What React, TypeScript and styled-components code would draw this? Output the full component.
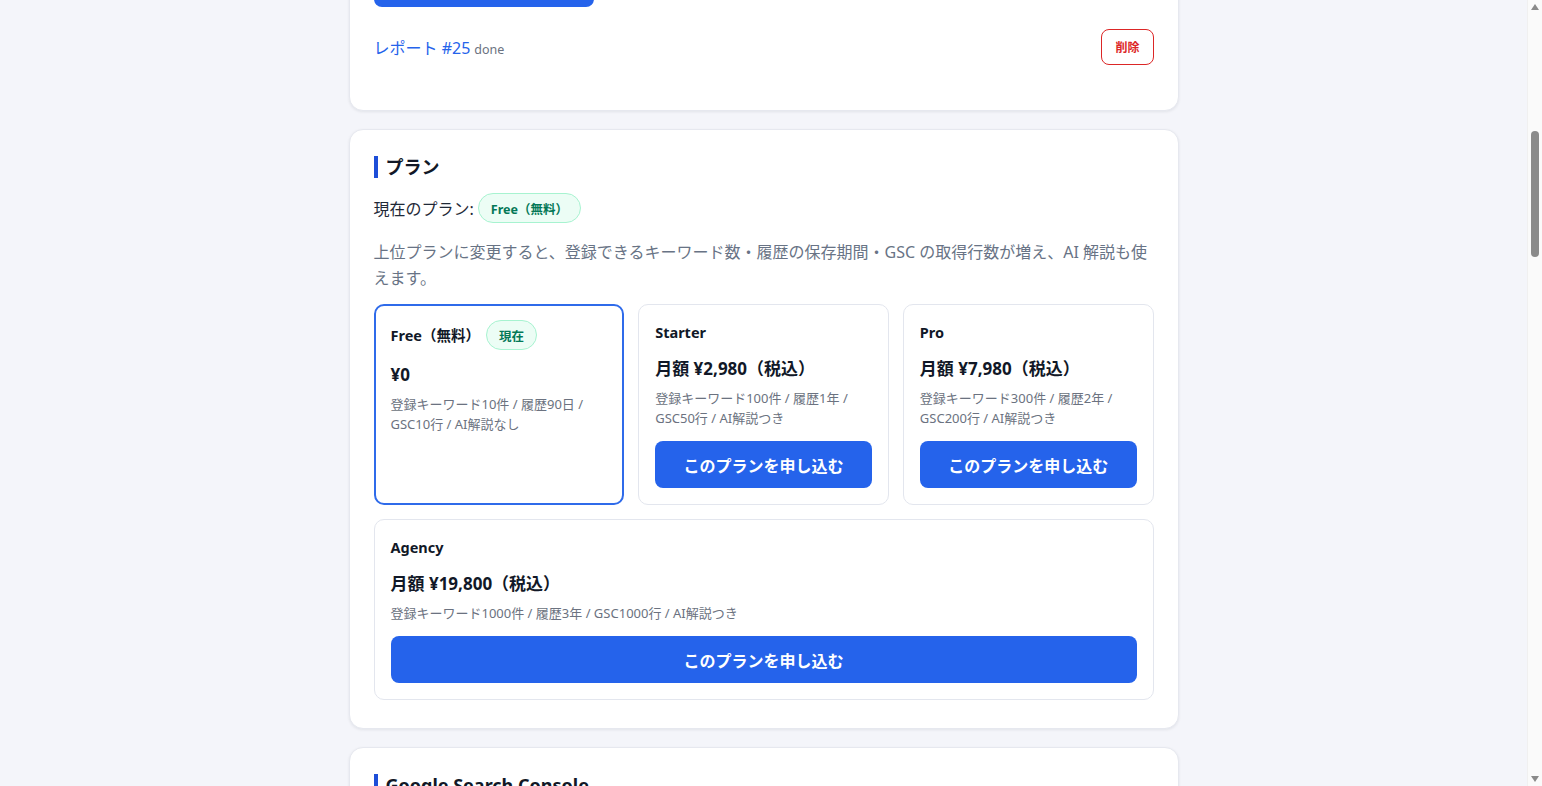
import React from "react";
import styled, { createGlobalStyle } from "styled-components";

const GlobalStyle = createGlobalStyle`
  html {
    overflow: hidden;
  }
  body {
    margin: 0;
    padding-right: 15px;
    background: #f4f5fa;
    font-family: "Noto Sans", "Noto Sans CJK JP", sans-serif;
    color: #111827;
  }
`;

const Page = styled.main`
  max-width: 830px;
  margin: -67px auto 0;
  display: flex;
  flex-direction: column;
  gap: 18px;
  padding-bottom: 40px;
`;

const Card = styled.section`
  background: #fff;
  border: 1px solid #e6e8ef;
  border-radius: 14px;
  box-shadow: 0 1px 3px rgba(15, 23, 42, 0.08);
  padding: 26px 24px 24px;
`;

const PrimaryButton = styled.button<{ $wide?: boolean }>`
  display: block;
  width: ${(p) => (p.$wide ? "100%" : "220px")};
  height: 47px;
  border: none;
  border-radius: 8px;
  background: #2563eb;
  color: #fff;
  font-family: inherit;
  font-size: 16px;
  font-weight: 700;
  cursor: pointer;
`;

const ReportRow = styled.div`
  display: flex;
  align-items: center;
  justify-content: space-between;
  margin-top: 22px;
  margin-bottom: 21px;
`;

const ReportLink = styled.a`
  color: #2563eb;
  font-size: 16px;
  text-decoration: none;
`;

const Status = styled.span`
  color: #6b7280;
  font-size: 12.5px;
  margin-left: 4px;
`;

const DangerButton = styled.button`
  height: 36px;
  padding: 0 13px;
  background: #fff;
  border: 1px solid #dc2626;
  border-radius: 8px;
  color: #dc2626;
  font-family: inherit;
  font-size: 12px;
  font-weight: 700;
`;

const SectionTitle = styled.h2`
  margin: 0 0 15px;
  padding-left: 8px;
  border-left: 4px solid #1d4ed8;
  font-size: 18px;
  font-weight: 700;
  line-height: 22px;
  color: #111827;
`;

const CurrentLine = styled.div`
  display: flex;
  align-items: center;
  gap: 4px;
  font-size: 16px;
  color: #1f2937;
`;

const Pill = styled.span`
  display: inline-flex;
  align-items: center;
  box-sizing: border-box;
  padding: 0 12px;
  height: 30px;
  border-radius: 999px;
  background: #ecfdf5;
  border: 1px solid #a7f3d0;
  color: #047857;
  font-size: 12.5px;
  font-weight: 700;
`;

const Lead = styled.p`
  margin: 16px 0 13px;
  font-size: 16px;
  line-height: 26px;
  color: #687385;
`;

const PlanGrid = styled.div`
  display: flex;
  flex-wrap: wrap;
  gap: 14px;
  margin-bottom: 4px;
`;

const PlanCard = styled.div<{ $current?: boolean }>`
  flex: 1 1 220px;
  box-sizing: border-box;
  padding: ${(p) => (p.$current ? "15px" : "16px")};
  border: ${(p) => (p.$current ? "2px solid #2f6bea" : "1px solid #e3e6ee")};
  border-radius: 10px;
  background: #fff;
  display: flex;
  flex-direction: column;
`;

const PlanHead = styled.div`
  display: flex;
  align-items: center;
  gap: 6px;
  min-height: 22px;

  ${Pill} {
    margin: -1px 0;
  }
`;

const PlanName = styled.span`
  font-size: 14.5px;
  font-weight: 700;
  line-height: 22px;
`;

const Price = styled.div`
  margin-top: 15px;
  font-size: 17px;
  font-weight: 700;
  line-height: 22px;
`;

const Spec = styled.div`
  margin-top: 8px;
  font-size: 13px;
  line-height: 20px;
  color: #6b7280;
`;

const ButtonSlot = styled.div`
  margin-top: 13px;
`;

const GscText = styled.p`
  margin: 0;
  font-size: 14px;
  line-height: 22px;
  color: #6b7280;
`;

/* browser scrollbar overlay, drawn to match the captured page */
const ScrollTrack = styled.div`
  position: fixed;
  top: 0;
  right: 0;
  width: 15px;
  height: 100vh;
  background: #fafafa;
  border-left: 1px solid #f0f0f0;
  box-sizing: border-box;
`;

const ScrollArrow = styled.div<{ $down?: boolean }>`
  position: absolute;
  left: 3px;
  ${(p) => (p.$down ? "bottom: 4px;" : "top: 4px;")}
  width: 0;
  height: 0;
  border-left: 4px solid transparent;
  border-right: 4px solid transparent;
  ${(p) =>
    p.$down ? "border-top: 6px solid #8a8a8a;" : "border-bottom: 6px solid #8a8a8a;"}
`;

const ScrollThumb = styled.div`
  position: absolute;
  left: 3px;
  top: 131px;
  width: 8px;
  height: 126px;
  border-radius: 4px;
  background: #8a8a8a;
`;

type Plan = {
  name: string;
  price: string;
  spec: string;
  current?: boolean;
};

const plans: Plan[] = [
  {
    name: "Free（無料）",
    price: "¥0",
    spec: "登録キーワード10件 / 履歴90日 / GSC10行 / AI解説なし",
    current: true,
  },
  {
    name: "Starter",
    price: "月額 ¥2,980（税込）",
    spec: "登録キーワード100件 / 履歴1年 / GSC50行 / AI解説つき",
  },
  {
    name: "Pro",
    price: "月額 ¥7,980（税込）",
    spec: "登録キーワード300件 / 履歴2年 / GSC200行 / AI解説つき",
  },
  {
    name: "Agency",
    price: "月額 ¥19,800（税込）",
    spec: "登録キーワード1000件 / 履歴3年 / GSC1000行 / AI解説つき",
  },
];

const App = () => {
  return (
    <>
      <GlobalStyle />
      <Page>
        <Card>
          <PrimaryButton>レポートを作成</PrimaryButton>
          <ReportRow>
            <div>
              <ReportLink href="#">レポート #25</ReportLink>
              <Status>done</Status>
            </div>
            <DangerButton>削除</DangerButton>
          </ReportRow>
        </Card>

        <Card>
          <SectionTitle>プラン</SectionTitle>
          <CurrentLine>
            現在のプラン: <Pill>Free（無料）</Pill>
          </CurrentLine>
          <Lead>
            上位プランに変更すると、登録できるキーワード数・履歴の保存期間・GSC
            の取得行数が増え、AI 解説も使えます。
          </Lead>
          <PlanGrid>
            {plans.map((plan) => (
              <PlanCard key={plan.name} $current={plan.current}>
                <PlanHead>
                  <PlanName>{plan.name}</PlanName>
                  {plan.current && <Pill>現在</Pill>}
                </PlanHead>
                <Price>{plan.price}</Price>
                <Spec>{plan.spec}</Spec>
                {!plan.current && (
                  <ButtonSlot>
                    <PrimaryButton $wide>このプランを申し込む</PrimaryButton>
                  </ButtonSlot>
                )}
              </PlanCard>
            ))}
          </PlanGrid>
        </Card>

        <Card>
          <SectionTitle>Google Search Console</SectionTitle>
          <GscText>
            Search Console と連携すると、検索クエリの表示回数・クリック数を取得できます。
          </GscText>
          <ButtonSlot>
            <PrimaryButton>連携する</PrimaryButton>
          </ButtonSlot>
        </Card>
      </Page>
      <ScrollTrack>
        <ScrollArrow />
        <ScrollThumb />
        <ScrollArrow $down />
      </ScrollTrack>
    </>
  );
};

export default App;
